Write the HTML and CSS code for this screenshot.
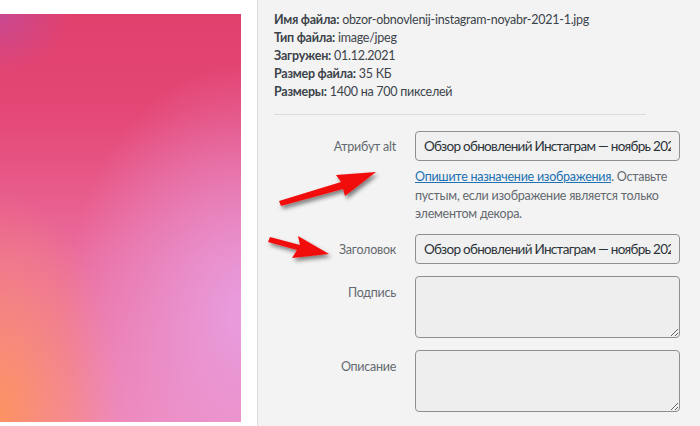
FILE: index.html
```html
<!DOCTYPE html>
<html lang="ru">
<head>
<meta charset="utf-8">
<link rel="stylesheet" href="styles.css">
</head>
<body>
<div class="preview">
  <div class="thumb"></div>
</div>
<div class="details">
  <div class="meta">
    <div><strong>Имя файла:</strong> obzor-obnovlenij-instagram-noyabr-2021-1.jpg</div>
    <div><strong>Тип файла:</strong> image/jpeg</div>
    <div><strong>Загружен:</strong> 01.12.2021</div>
    <div><strong>Размер файла:</strong> 35 КБ</div>
    <div><strong>Размеры:</strong> 1400 на 700 пикселей</div>
  </div>
  <div class="sep"></div>
  <div class="settings">
    <label class="lbl">Атрибут alt</label>
    <div class="field">
      <input class="inp" type="text" value="Обзор обновлений Инстаграм — ноябрь 2021">
      <p class="help"><a href="#">Опишите назначение изображения</a>. Оставьте пустым, если изображение является только элементом декора.</p>
    </div>
    <label class="lbl">Заголовок</label>
    <div class="field"><input class="inp" type="text" value="Обзор обновлений Инстаграм — ноябрь 2021"></div>
    <label class="lbl ta">Подпись</label>
    <div class="field"><textarea class="txt"></textarea></div>
    <label class="lbl ta">Описание</label>
    <div class="field"><textarea class="txt"></textarea></div>
  </div>
  <svg class="arrows" width="700" height="426" viewBox="0 0 700 426">
    <defs>
      <filter id="sh" x="-20%" y="-50%" width="140%" height="200%">
        <feGaussianBlur in="SourceAlpha" stdDeviation="2"/>
        <feOffset dx="2" dy="3" result="b"/>
        <feComponentTransfer><feFuncA type="linear" slope="0.5"/></feComponentTransfer>
        <feMerge><feMergeNode/><feMergeNode in="SourceGraphic"/></feMerge>
      </filter>
    </defs>
    <g filter="url(#sh)" fill="#f20d0d">
      <polygon points="279,201 341,182 336,175 376,172 345,196 343,189 281,206"/>
      <polygon points="270,237 300,245 298,236 329,254 292,258 297,250 268,242"/>
    </g>
  </svg>
</div>
</body>
</html>
```
FILE: styles.css
```css
html, body {
  margin: 0;
  padding: 0;
}
body {
  width: 700px;
  height: 426px;
  overflow: hidden;
  display: flex;
  font-family: Lato, "Liberation Sans", sans-serif;
  font-size: 12.5px;
  letter-spacing: -0.25px;
  color: #3c434a;
}
.preview {
  width: 257px;
  flex: none;
  background: #fff;
  border-right: 1px solid #dcdcde;
  padding-top: 14px;
}
.thumb {
  width: 241px;
  height: 408px;
  background:
    radial-gradient(ellipse 180px 250px at 245px 300px, rgba(232,160,226,0.95), rgba(232,150,220,0) 100%),
    radial-gradient(ellipse 120px 220px at 0px 400px, rgba(252,146,98,1), rgba(250,130,110,0) 100%),
    radial-gradient(ellipse 70px 60px at 0px 0px, rgba(196,74,150,0.85), rgba(196,74,150,0) 100%),
    linear-gradient(180deg, #e1406d 0%, #e44876 25%, #ea6d9e 60%, #ef85b5 100%);
}
.details {
  flex: 1;
  background: #f3f3f3;
  padding: 11px 0 0 16px;
  position: relative;
}
.meta {
  line-height: 18px;
}
.meta strong {
  font-weight: 700;
}
.sep {
  width: 372px;
  border-top: 1px solid #dcdcde;
  margin: 13px 0 16px;
}
.settings {
  display: grid;
  grid-template-columns: 122px 265px;
  column-gap: 19px;
  row-gap: 12px;
  align-items: start;
}
.lbl {
  text-align: right;
  color: #646970;
  line-height: 18px;
  padding-top: 7px;
}
.lbl.ta {
  padding-top: 8px;
}
.inp {
  box-sizing: border-box;
  display: block;
  width: 265px;
  height: 30px;
  margin: 0;
  padding: 0 8px;
  border: 1px solid #8c8f94;
  border-radius: 4px;
  background: #f0f0f0;
  font-family: Lato, "Liberation Sans", sans-serif;
  font-size: 13.5px;
  letter-spacing: -0.7px;
  color: #2c3338;
}
.txt {
  box-sizing: border-box;
  display: block;
  width: 265px;
  height: 62px;
  margin: 0;
  padding: 4px 8px;
  border: 1px solid #8c8f94;
  border-radius: 4px;
  background: #eeeeee;
  resize: vertical;
}
.help {
  margin: 7px 0 0;
  color: #646970;
  line-height: 18.5px;
  margin-bottom: -2px;
}
.help a {
  color: #2271b1;
  text-decoration: underline;
}
.arrows {
  position: absolute;
  left: -258px;
  top: 0;
  pointer-events: none;
}
```
